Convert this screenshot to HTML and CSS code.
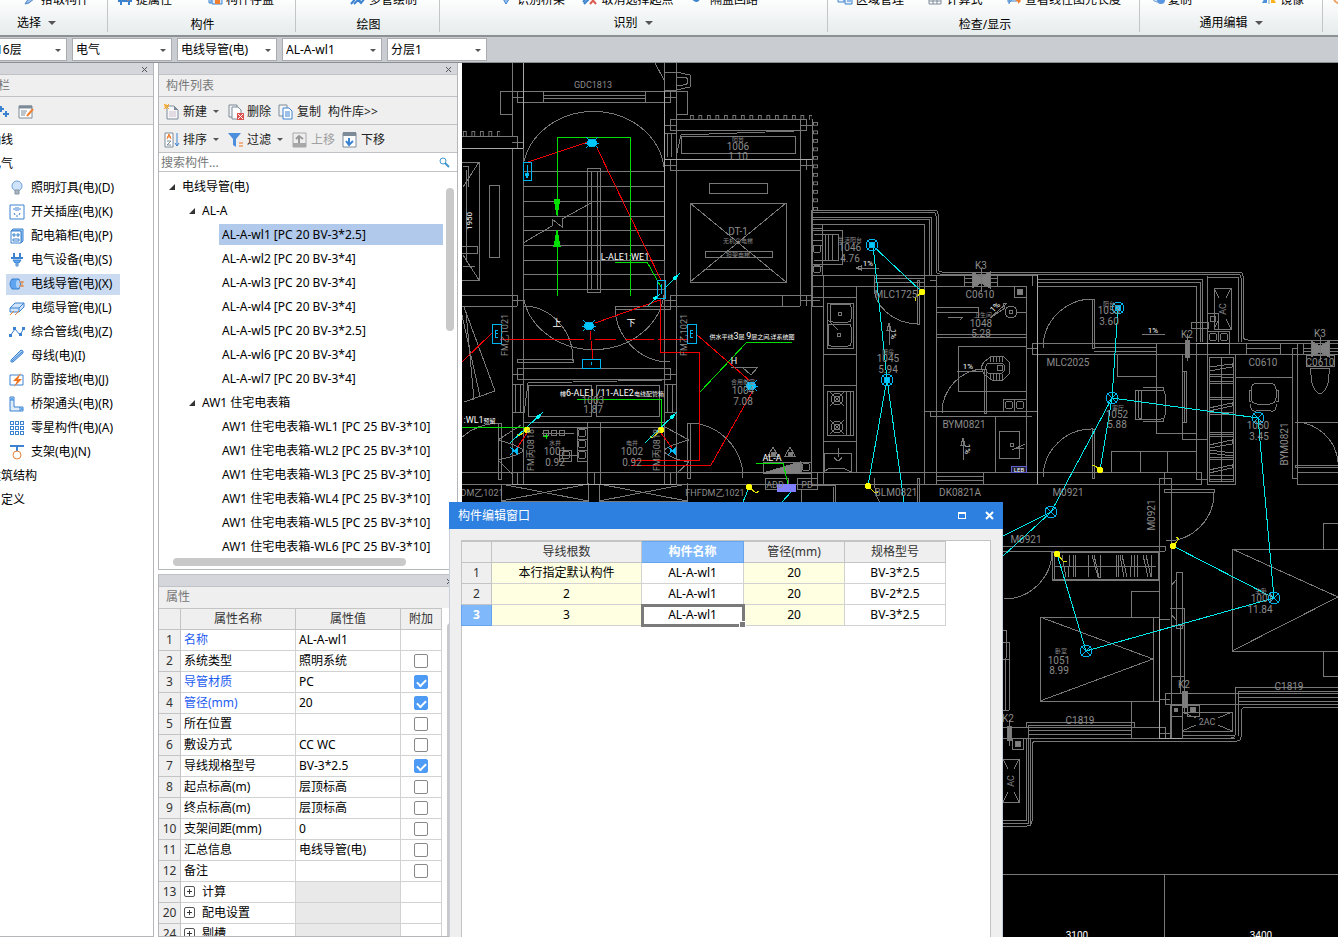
FILE: index.html
```html
<!DOCTYPE html>
<html lang="zh-CN">
<head>
    <meta charset="UTF-8">
    <meta name="viewport" content="width=device-width, initial-scale=1.0">
    <title>构件编辑</title>
    <link rel="stylesheet" href="styles.css">
</head>
<body>
    <!-- Ribbon -->
    <header class="ribbon">
        <section class="group group-select">
            <div class="tools">
                <button class="tool"><svg width="16" height="16"><path d="M3 14L9 5l4 3-6 5z" fill="#9bbce6" stroke="#4a86c8"/></svg>拾取构件</button>
            </div>
            <button class="group-name">选择<i class="caret"></i></button>
        </section>
        <section class="group group-part">
            <div class="tools">
                <button class="tool"><svg width="16" height="16"><path d="M1 11h14M4 4v11M12 4v11" stroke="#3b82d0" stroke-width="2"/><path d="M6 7h5v4" stroke="#f08030" fill="none"/></svg>提属性</button>
                <button class="tool"><svg width="16" height="16"><path d="M2 4h2v9H2zM5 5h10v9H5z" fill="#dbe9fa" stroke="#3b82d0"/><path d="M8 10h5v4H8z" fill="#f08030"/></svg>构件存盘</button>
            </div>
            <div class="group-name">构件</div>
        </section>
        <section class="group group-draw">
            <div class="tools">
                <button class="tool"><svg width="16" height="16"><path d="M1 14L6 8l3 3 6-7M4 14l4-4 3 3 4-5" stroke="#3b82d0" stroke-width="2" fill="none"/></svg>多管绘制</button>
            </div>
            <div class="group-name">绘图</div>
        </section>
        <section class="group group-detect">
            <div class="tools">
                <button class="tool"><svg width="16" height="16"><path d="M4 7l4 3 5-4-5 8z" fill="#9cc4f2" stroke="#3b82d0"/></svg>识别桥架</button>
                <button class="tool"><svg width="16" height="16"><path d="M1 12l6-7M2 14l7-7" stroke="#3b82d0" stroke-width="2"/><path d="M8 7l6 7M14 7l-6 7" stroke="#dc5b50" stroke-width="2"/></svg>取消选择起点</button>
                <button class="tool"><svg width="16" height="16"><path d="M2 9q4 4 6 0" stroke="#3b82d0" stroke-width="2" fill="none"/><path d="M12 5v5" stroke="#f08030" stroke-width="2"/></svg>隔盖回路</button>
            </div>
            <button class="group-name">识别<i class="caret"></i></button>
        </section>
        <section class="group group-check">
            <div class="tools">
                <button class="tool"><svg width="16" height="16"><path d="M1 4h6v8H1zM8 5h7v9H8z" fill="#e8f1fc" stroke="#3b82d0"/><path d="M10 9h4M10 11h4" stroke="#3b82d0"/><path d="M3 6h2v3H3z" fill="#f08030"/></svg>区域管理</button>
                <button class="tool"><svg width="16" height="16"><path d="M2 2h12v12H2zM2 8h12M2 11h12M6 5v9M10 5v9" fill="#fff" stroke="#7d8b99"/></svg>计算式</button>
                <button class="tool"><svg width="16" height="16"><path d="M1 11h10M3 4v10M3 13l6-7" stroke="#3b82d0" fill="none"/><path d="M9 10h3V7l3 4-3 3v-2z" fill="#f08030"/></svg>查看线性图元长度</button>
            </div>
            <div class="group-name">检查/显示</div>
        </section>
        <section class="group group-edit">
            <div class="tools">
                <button class="tool tool-tight"><svg width="16" height="16"><circle cx="5" cy="8" r="4" fill="#c9dff8" stroke="#7da9dc"/><circle cx="9" cy="10" r="4" fill="#5a97e0"/></svg>复制</button>
                <button class="tool"><svg width="16" height="16"><path d="M1 13l5-9v9z" fill="#4b8fdd"/><path d="M10 4l5 9h-5z" fill="#f9b21d"/><path d="M8 2v12" stroke="#8aa"/></svg>镜像</button>
            </div>
            <button class="group-name">通用编辑<i class="caret"></i></button>
        </section>
        <section class="group group-more">
            <div class="tools">
                <button class="tool" aria-label="旋转"><svg width="16" height="16"><circle cx="8" cy="8" r="5" fill="none" stroke="#f0a060" stroke-width="2"/></svg></button>
            </div>
        </section>
    </header>

    <!-- Context selectors -->
    <div class="filters">
        <div class="combo combo-floor"><select aria-label="楼层"><option>16层</option></select></div>
        <div class="combo"><select aria-label="专业"><option>电气</option></select></div>
        <div class="combo"><select aria-label="构件类型"><option>电线导管(电)</option></select></div>
        <div class="combo"><select aria-label="构件"><option>AL-A-wl1</option></select></div>
        <div class="combo"><select aria-label="分层"><option>分层1</option></select></div>
    </div>

    <main class="workspace">
        <!-- Navigation -->
        <aside class="panel nav-panel">
            <div class="strip"><button class="close" aria-label="关闭"><svg width="7" height="7"><path d="M1 1l5 5M6 1L1 6"/></svg></button></div>
            <h2>导航栏</h2>
            <div class="toolbar nav-tools">
                <button aria-label="展开"><svg width="12" height="14"><path d="M3 1v6M0 4h6M8 6v6M5 9h6" stroke="#3b82d0" stroke-width="2"/></svg></button>
                <button aria-label="编辑"><svg width="16" height="14"><path d="M1 1h13v12H1z" fill="#fff" stroke="#7d8b99"/><path d="M1 2h13" stroke="#7d8b99" stroke-width="3"/><path d="M3 6h6M3 8h5M3 10h4" stroke="#7d8b99"/><path d="M9 11l6-7" stroke="#f08030" stroke-width="2"/></svg></button>
            </div>
            <ul class="nav-list">
                <li class="top">轴线</li>
                <li class="top">电气</li>
                <li><a href="#"><svg viewBox="0 0 16 16"><circle cx="8" cy="6" r="5" fill="#cfe3fa" stroke="#6d9fd6"/><path d="M6 10h4v4H6z" fill="#aab4be" stroke="#8795a3"/></svg>照明灯具(电)(D)</a></li>
                <li><a href="#"><svg viewBox="0 0 16 16"><path d="M1 1h14v14H1z" fill="#fff" stroke="#3b82d0"/><path d="M4 5h2M10 5h2M7 3v4M9 3v4M5 9l1 2M11 9l-1 2M7 12h2" stroke="#3b82d0"/></svg>开关插座(电)(K)</a></li>
                <li><a href="#"><svg viewBox="0 0 16 16"><path d="M4 1h10v12l-2 2V3H2z" fill="#a9cdf5" stroke="#3b82d0"/><path d="M2 3h10v12H2z" fill="#fff" stroke="#3b82d0"/><path d="M4 6h2v2H4zM8 6h2v2H8zM4 11h6v2H4z" fill="#fff" stroke="#3b82d0"/></svg>配电箱柜(电)(P)</a></li>
                <li><a href="#"><svg viewBox="0 0 16 16"><path d="M5 1v5M11 1v5M2 6h12" stroke="#3b82d0" stroke-width="2"/><path d="M4 8h8l-2 3H6zM6 13h4M8 11v4" fill="#5fa4f0" stroke="#3b82d0"/></svg>电气设备(电)(S)</a></li>
                <li><a href="#" class="active"><svg viewBox="0 0 16 16"><path d="M3 3h7q3 5 0 10H3Q-1 8 3 3z" fill="#5fa4f0" stroke="#3b82d0"/><ellipse cx="9" cy="8" rx="2" ry="4" fill="#a9d0fa"/><path d="M10 6h5M10 10h5M13 5v6" stroke="#e8823a"/></svg>电线导管(电)(X)</a></li>
                <li><a href="#"><svg viewBox="0 0 16 16"><path d="M1 8l5-5h9v4l-5 5H1zM1 8h9v4M10 8l5-5" fill="#cfe3fa" stroke="#3b82d0"/><path d="M1 15l4-4M6 15l4-4" stroke="#e8823a"/></svg>电缆导管(电)(L)</a></li>
                <li><a href="#"><svg viewBox="0 0 16 16"><path d="M1 12l5-7 5 6 4-7" fill="none" stroke="#3b82d0"/><path d="M0 10h3v3H0zM4 3h3v3H4zM10 9h3v3h-3zM13 3h3v3h-3z" fill="#3b82d0"/></svg>综合管线(电)(Z)</a></li>
                <li><a href="#"><svg viewBox="0 0 16 16"><path d="M2 12L12 2l2 1v2L4 14H2z" fill="#a9cdf5" stroke="#3b82d0"/><path d="M3 13L13 4" stroke="#3b82d0"/></svg>母线(电)(I)</a></li>
                <li><a href="#"><svg viewBox="0 0 16 16"><path d="M1 3h13v10H1z" fill="#fff" stroke="#3b82d0"/><path d="M12 1L4 9h4l-3 6 8-8H9z" fill="#f0731e"/></svg>防雷接地(电)(J)</a></li>
                <li><a href="#"><svg viewBox="0 0 16 16"><path d="M1 1h4v10h9v4H1zM1 4h4M11 11v4" fill="#dfebf9" stroke="#3b82d0"/><path d="M2 2h2v2H2zM12 12h2v2h-2z" fill="#5fa4f0"/></svg>桥架通头(电)(R)</a></li>
                <li><a href="#"><svg viewBox="0 0 16 16" shape-rendering="crispEdges"><path d="M1 1h3v3H1zM6 1h3v3H6zM11 1h3v3h-3zM1 6h3v3H1zM6 6h3v3H6zM11 6h3v3h-3zM1 11h3v3H1zM6 11h3v3H6zM11 11h3v3h-3z" fill="#fff" stroke="#3b82d0"/></svg>零星构件(电)(A)</a></li>
                <li><a href="#"><svg viewBox="0 0 16 16"><path d="M1 2h14M8 2v5" stroke="#3b82d0" stroke-width="2"/><circle cx="8" cy="11" r="4" fill="#fff" stroke="#e8823a"/></svg>支架(电)(N)</a></li>
                <li class="top">建筑结构</li>
                <li class="top">自定义</li>
            </ul>
        </aside>

        <div class="column">
            <!-- Component list -->
            <section class="panel list-panel">
                <div class="strip"><button class="close" aria-label="关闭"><svg width="7" height="7"><path d="M1 1l5 5M6 1L1 6"/></svg></button></div>
                <h2>构件列表</h2>
                <div class="toolbar">
                    <button><svg width="16" height="16"><path d="M3 2h7l4 4v9H3z" fill="#f6f6f8" stroke="#7d8b99"/><path d="M10 2v4h4z" fill="#7d8b99"/><path d="M5 8h7M5 10h7M5 12h7" stroke="#cdbfd0"/><path d="M0 0l5 5M5 0L0 5M2 0v5M0 2h5" stroke="#f5a623"/></svg>新建<i class="caret small"></i></button>
                    <button><svg width="16" height="16"><path d="M1 1h8v12H1z" fill="#f4f4f4" stroke="#7d8b99"/><path d="M4 3h6l3 3v9H4z" fill="#fff" stroke="#7d8b99"/><path d="M9 9h7v7H9z" fill="#d9534f"/><path d="M10 10l5 5M15 10l-5 5" stroke="#fff"/></svg>删除</button>
                    <button><svg width="16" height="16"><path d="M1 1h8v11H1z" fill="#f4f4f4" stroke="#7d8b99"/><path d="M5 4h6l3 3v8H5z" fill="#fff" stroke="#3b82d0"/><path d="M7 8h5M7 10h5M7 12h5" stroke="#3b82d0"/></svg>复制</button>
                    <button>构件库&gt;&gt;</button>
                </div>
                <div class="toolbar">
                    <button><svg width="16" height="16"><path d="M1 1h8v14H1z" fill="#fff" stroke="#7d8b99"/><path d="M3 7l2-5 2 5M3 5h4" stroke="#f0731e" fill="none"/><path d="M3 9h4l-4 4h4" stroke="#7d8b99" fill="none"/><path d="M13 1v13M11 11l2 3 2-3" stroke="#3b82d0" fill="none"/></svg>排序<i class="caret small"></i></button>
                    <button><svg width="16" height="16"><path d="M0 1h13L8 7v8l-3-2V7z" fill="#4b8fdd"/><path d="M11 11h4M11 14h4" stroke="#f0731e"/></svg>过滤<i class="caret small"></i></button>
                    <button disabled><svg width="16" height="16"><path d="M1 1h13v14H1z" fill="#eee" stroke="#a8a8a8"/><path d="M1 13h13" stroke="#a8a8a8" stroke-width="4"/><path d="M7 11V4M4 7l3-3 4 3" stroke="#999" stroke-width="2" fill="none"/></svg>上移</button>
                    <button><svg width="16" height="16"><path d="M1 1h13v14H1z" fill="#fff" stroke="#7d8b99"/><path d="M1 2h13" stroke="#7d8b99" stroke-width="4"/><path d="M7 6v7M4 9l3 4 4-4" stroke="#3b82d0" stroke-width="2" fill="none"/></svg>下移</button>
                </div>
                <div class="search">
                    <input type="text" aria-label="搜索构件" placeholder="搜索构件...">
                    <svg width="11" height="11"><circle cx="4" cy="4" r="3" fill="none" stroke="#3e97cf"/><path d="M6 6l4 4" stroke="#3e97cf" stroke-width="2"/></svg>
                </div>
                <div class="tree-box">
                    <ul class="tree">
                        <li class="level1"><i class="open"></i>电线导管(电)</li>
                        <li class="level2"><i class="open"></i>AL-A</li>
                        <li class="level3"><span class="selected">AL-A-wl1 [PC 20 BV-3*2.5]</span></li>
                        <li class="level3"><span>AL-A-wl2 [PC 20 BV-3*4]</span></li>
                        <li class="level3"><span>AL-A-wl3 [PC 20 BV-3*4]</span></li>
                        <li class="level3"><span>AL-A-wl4 [PC 20 BV-3*4]</span></li>
                        <li class="level3"><span>AL-A-wl5 [PC 20 BV-3*2.5]</span></li>
                        <li class="level3"><span>AL-A-wl6 [PC 20 BV-3*4]</span></li>
                        <li class="level3"><span>AL-A-wl7 [PC 20 BV-3*4]</span></li>
                        <li class="level2"><i class="open"></i>AW1 住宅电表箱</li>
                        <li class="level3"><span>AW1 住宅电表箱-WL1 [PC 25 BV-3*10]</span></li>
                        <li class="level3"><span>AW1 住宅电表箱-WL2 [PC 25 BV-3*10]</span></li>
                        <li class="level3"><span>AW1 住宅电表箱-WL3 [PC 25 BV-3*10]</span></li>
                        <li class="level3"><span>AW1 住宅电表箱-WL4 [PC 25 BV-3*10]</span></li>
                        <li class="level3"><span>AW1 住宅电表箱-WL5 [PC 25 BV-3*10]</span></li>
                        <li class="level3"><span>AW1 住宅电表箱-WL6 [PC 25 BV-3*10]</span></li>
                    </ul>
                    <div class="vbar"></div>
                    <div class="hbar"></div>
                </div>
            </section>

            <!-- Properties -->
            <section class="panel prop-panel">
                <div class="strip"><button class="close" aria-label="关闭"><svg width="7" height="7"><path d="M1 1l5 5M6 1L1 6"/></svg></button></div>
                <h2>属性</h2>
                <div class="prop-body">
                    <table class="grid props">
                        <thead>
                            <tr><th class="c-num"></th><th class="c-name">属性名称</th><th class="c-value">属性值</th><th class="c-extra">附加</th></tr>
                        </thead>
                        <tbody>
                            <tr><th>1</th><td class="key">名称</td><td>AL-A-wl1</td><td></td></tr>
                            <tr><th>2</th><td>系统类型</td><td>照明系统</td><td><input type="checkbox" aria-label="系统类型"></td></tr>
                            <tr><th>3</th><td class="key">导管材质</td><td>PC</td><td><input type="checkbox" aria-label="导管材质" checked></td></tr>
                            <tr><th>4</th><td class="key">管径(mm)</td><td>20</td><td><input type="checkbox" aria-label="管径" checked></td></tr>
                            <tr><th>5</th><td>所在位置</td><td></td><td><input type="checkbox" aria-label="所在位置"></td></tr>
                            <tr><th>6</th><td>敷设方式</td><td>CC WC</td><td><input type="checkbox" aria-label="敷设方式"></td></tr>
                            <tr><th>7</th><td>导线规格型号</td><td>BV-3*2.5</td><td><input type="checkbox" aria-label="导线规格型号" checked></td></tr>
                            <tr><th>8</th><td>起点标高(m)</td><td>层顶标高</td><td><input type="checkbox" aria-label="起点标高"></td></tr>
                            <tr><th>9</th><td>终点标高(m)</td><td>层顶标高</td><td><input type="checkbox" aria-label="终点标高"></td></tr>
                            <tr><th>10</th><td>支架间距(mm)</td><td>0</td><td><input type="checkbox" aria-label="支架间距"></td></tr>
                            <tr><th>11</th><td>汇总信息</td><td>电线导管(电)</td><td><input type="checkbox" aria-label="汇总信息"></td></tr>
                            <tr><th>12</th><td>备注</td><td></td><td><input type="checkbox" aria-label="备注"></td></tr>
                            <tr><th>13</th><td><button class="expand" aria-label="展开计算"></button>计算</td><td class="off"></td><td></td></tr>
                            <tr><th>20</th><td><button class="expand" aria-label="展开配电设置"></button>配电设置</td><td class="off"></td><td></td></tr>
                            <tr><th>24</th><td><button class="expand" aria-label="展开剔槽"></button>剔槽</td><td class="off"></td><td></td></tr>
                        </tbody>
                    </table>
                    <div class="prop-bar"></div>
                </div>
            </section>
        </div>

        <!-- Floor plan -->
        <section class="canvas">
            <svg class="plan" viewBox="462 63 876 874" preserveAspectRatio="xMinYMin slice">
                <defs>
                    <g id="lamp"><circle r="6"/><path d="M-4-4L4 4M4-4L-4 4"/></g>
                    <g id="lampOn"><circle r="6"/><path d="M-5-5L5 5M5-5L-5 5"/><path class="solid" d="M-3-3h5v5h-5z"/></g>
                    <g id="bulb"><path d="M-6-6l12 11M6-6L-6 5M-7 0H7"/><ellipse class="solid" rx="5" ry="4"/></g>
                    <g id="bow"><path class="fill" d="M-9-8L0-3 9-8V8L0 3-9 8z"/><path d="M0-12V12"/></g>
                    <pattern id="railH" x="689" y="114" width="8.5" height="6" patternUnits="userSpaceOnUse"><path class="wall" d="M1 1h3v5H1z"/></pattern>
                    <pattern id="railL" x="462" y="130" width="8.5" height="7" patternUnits="userSpaceOnUse"><path class="wall" d="M1 1h3v5H1z"/></pattern>
                    <pattern id="railV" x="812" y="121" width="6" height="8.5" patternUnits="userSpaceOnUse"><path class="wall" d="M1 1h4v3H1z"/></pattern>
                </defs>

                <!-- stairwell and lift -->
                <g class="wall">
                    <path d="M512 63V137M523 63V484M512 97V114M512 148V484M664 63V484M676 63V484M500 91H687M517 91V102H670V91M500 91V114H512M687 91V114H676M543 91V102M645 91V102M543 95H645M543 98H645M512 97H523M664 97H676"/>
                    <path d="M655 63L664 80M664 72H676L690 75V87L676 90H664M676 77H683Q688 77 688 81T683 85H676"/>
                    <path d="M523 167A71 63 0 0 1 664 167M523 295A71 62 0 0 0 664 295"/>
                    <path d="M523 171H664M523 186H664M523 201H664M523 216H664M523 230H664M523 245H664M523 260H664M523 274H664M523 289H664M587 168H600V292H587zM591 171H597V289H591z"/>
                    <path d="M523 243L552 226V219L562 227V219L591 203"/>
                    <path d="M462 136H517V148M462 148H523M512 142H523M462 162H479V280H462M479 162L463 187M479 280L463 255M463 166H468V187M489 185H499V257H489zM462 246H477V253H462M463 266H475M466 170V262"/>
                    <path d="M670 119H806V130H670zM664 125H676M664 159H812M670 170H800M670 159V170M664 165H676M806 159V170M812 119V306M800 119V306M800 125H812M800 165H812M681 136H795V153H681zM681 135L794 131M681 135L676 157M664 133H676M667 133V157M671 133V157"/>
                    <path d="M709 183H767V193H709zM690 203H786V282H690zM690 203L786 282M786 203L690 282M705 251H772V257H705zM706 269H770"/>
                    <path d="M462 295H517M462 306H517M517 295V306M512 300H523M670 295H811M670 306H800M670 295V306M664 300H676M782 295V306M806 295V306M800 300H820"/>
                    <path d="M523 306A50 54 0 0 1 573 361M517 359H573V362H517zM615 306A55 56 0 0 0 670 362M615 306H670V309H615zM517 368H670V379H517zM512 374H523M664 374H676"/>
                    <path d="M464 307L495 391L464 402M462 315L480 396M466 312L474 400"/>
                    <path d="M528 385H591V416H528zM596 385H659V416H596zM528 383L663 380M528 383L523 421M515 384V412M520 384V412M667 384V412M672 384V412M512 384H523M512 412H523M664 384H676M664 412H676M523 422H664M523 427H664M587 422V484M600 422V484"/>
                    <path d="M462 437Q477 424 498 423M498 423H501V479H498zM498 440L521 425M498 440Q523 447 523 451M498 460Q520 455 523 451M498 460L512 474M665 427L689 440M689 440Q666 446 664 451Q668 458 689 462M689 462L676 474M687 423H690V478H687zM690 423A55 55 0 0 1 743 478"/>
                    <path d="M577 428H587V461H577zM577 439H587M577 450H587M542 433H574M559 450H571V461H559zM559 455H577"/>
                    <g><circle cx="582" cy="433" r="4"/><circle cx="582" cy="444" r="4"/><circle cx="582" cy="455" r="4"/><circle cx="546" cy="433" r="3"/><circle cx="554" cy="433" r="3"/><circle cx="562" cy="433" r="3"/><circle cx="566" cy="455" r="4"/></g>
                    <path d="M462 472H817V484H462M501 484V501H588V484L501 501M501 484L588 501M599 484V501H687V484L599 501M599 484L687 501M517 472V484M523 472V484M594 472V484M670 472V484"/>
                    <path d="M731 367H758L751 375L742 367M763 462H811V473H763zM801 462V473M765 478H788V489H765zM797 478H817V489H797zM801 489V502M768 456L773 447L778 456zM785 456L790 447L795 456z"/>
                    <path class="fill" d="M763 473L800 462V473zM771 452h4v3h-4zM788 452h4v3h-4z"/><circle cx="806" cy="467" r="4"/>
                </g>
                <path fill="url(#railH)" d="M689 114H812V120H689z"/>
                <path fill="url(#railL)" d="M462 130H500V137H462z"/>
                <path fill="url(#railV)" d="M812 121H818V210H812z"/>

                <!-- kitchen, bath -->
                <g class="wall">
                    <path d="M812 210H934Q938 210 938 214V268Q938 272 942 272H1239Q1243 272 1243 276V335Q1243 340 1248 340H1338M812 212H932Q936 212 936 216V270Q936 274 940 274H1237Q1241 274 1241 278V342"/>
                    <path d="M812 217H931V275M812 219H929V275M812 224H924V275M812 230H842V264H812M814 234H838V260H814M825 234V260M828 234V260M832 234V260M822 224V275M812 228H822M812 240H822M812 245H822M812 266H822"/>
                    <circle cx="817" cy="249" r="4"/><circle cx="817" cy="269" r="4"/>
                    <path d="M811 275H1037V484M811 286H1026V472M811 210V484M823 275V484M856 286V472M874 275V286M874 278H924M874 282H924M924 275V484M936 275V484M930 280H936V291M811 297H823M811 306H823V295M964 275V286M997 275V286M964 278H997M964 282H997"/>
                    <path d="M823 297H856M823 354H856M823 385H856M823 441H856M827 303H853V348H827zM827 391H853V435H827zM846 391V435M850 391V435M824 453H851V472L843 468H829L824 472zM838 448V457"/>
                    <rect x="830" y="304" width="21" height="18" rx="3"/><rect x="828" y="324" width="23" height="22" rx="3"/>
                    <circle cx="840" cy="314" r="2"/><circle cx="839" cy="335" r="2"/><circle cx="837" cy="399" r="6"/><circle cx="837" cy="399" r="3"/><circle cx="837" cy="427" r="6"/><circle cx="837" cy="427" r="3"/>
                    <path d="M830 392L844 406M844 392L830 406M830 420L844 434M844 420L830 434M828 320L838 330M834 457Q838 464 842 457"/>
                    <path d="M874 286A45 38 0 0 0 918 324M917 280H919V324H917zM856 268H879M856 268l5-2v4zM889 323V345M889 323l-2 7h4zM957 371H983M990 318L1007 303l-4 1 2 4zM963 438V460M963 438l-2 7h4z"/>
                    <path d="M936 307H978V318M936 312H978M948 317H963L960 320M936 334H1026M936 337H1026M1014 286V297H1026M958 346H1026V391H958zM1003 399H1026V411H1003zM1014 399V411M1017 312H1026"/>
                    <circle cx="1011" cy="312" r="6"/><circle cx="1011" cy="312" r="2"/><circle class="fill" cx="1020" cy="292" r="3"/><circle cx="1009" cy="405" r="4"/><circle cx="1020" cy="405" r="4"/>
                    <path d="M985 361Q978 368 985 375L992 380H1003L1009 374V362L1003 356H992zM988 363Q983 368 988 373H1002Q1008 368 1002 363zM990 356V362M993 356V362M996 356V362M999 356V362M1002 356V362M990 374V380M993 374V380M996 374V380M999 374V380M1002 374V380"/><circle cx="1000" cy="368" r="3"/>
                    <path d="M924 411H1037M930 416H1032M930 411V416M942 413A43 44 0 0 1 984 369M984 369H986V413H984zM995 416V472M999 431H1019V458H999zM1012 450L1025 444M1014 448L1024 448"/><circle cx="1012" cy="445" r="2"/>
                    <path d="M811 472H1037M811 484H1037M936 476H983M936 480H983M983 472V484M811 485H835V502M833 487V502M874 478Q875 497 880 502M917 478H919V502H917z"/>
                    <path d="M1037 279H1202V342M1037 282H1200V342M1037 286H1196V342M1026 275L1032 275V286M1032 343H1338M1032 354H1338M1032 343V354M1026 348H1037M1043 348A50 49 0 0 1 1093 299M1092 299H1094V348H1092zM1043 478A49 49 0 0 1 1093 429M1092 429H1094V478H1092z"/>
                    <path d="M1094 347H1156M1094 351H1156M1156 343V354M1117 354V376H1156M1156 354V433H1196M1182 354V439H1207M1182 371H1186V422H1182zM1184 371V422M1196 343V479H1207M1207 276V484M1207 277H1238V342M1111 451H1196V472M1111 451V472M1140 451V472M1167 451V472M1037 472H1201V484H1037"/>
                    <rect x="1138" y="390" width="27" height="29" rx="4"/><path d="M1135 390H1141V419H1135zM1143 387H1163V390M1143 421H1163V418"/>
                    <path d="M1214 288H1231V329H1214zM1214 288L1219 298M1231 288L1226 298M1214 329L1219 319M1231 329L1226 319M1191 322H1208V328H1191zM1207 313H1218V329M1207 331H1229V354M1218 331V342M1142 334H1165"/>
                    <circle cx="1213" cy="319" r="3"/><circle cx="1213" cy="337" r="4"/><circle cx="1224" cy="337" r="4"/>
                    <path d="M1207 354H1235V484H1207zM1209 357H1233V481H1209zM1221 357V481M1209 367L1232 364V367L1209 371zM1209 374L1233 375V378L1209 376zM1209 381H1233M1209 383H1233M1209 397H1233M1209 399H1233M1209 408L1232 403V406L1209 411zM1209 412H1233M1209 414H1233M1209 432H1233M1209 434H1233M1209 437L1233 436M1209 445L1232 440V444L1209 448zM1209 450L1233 453V456L1209 453zM1209 457H1233M1209 459H1233M1209 470L1232 465V468L1209 473zM1209 475H1233M1209 479H1233"/>
                    <path d="M1246 343V354M1280 343V354M1246 348H1280M1236 377H1292M1292 348V478M1297 343V484M1292 348H1297M1292 478H1297M1306 355H1334V366H1306zM1303 343V354M1303 348H1338M1303 351H1338M1311 368Q1310 390 1320 394Q1330 390 1329 368z"/>
                    <rect x="1251" y="383" width="25" height="21" rx="6"/><path d="M1251 404Q1250 412 1256 411Q1263 409 1271 411Q1277 412 1276 404M1251 390H1249V401H1251M1276 390H1278V401H1276"/>
                    <path d="M1295 422A44 44 0 0 1 1338 462M1297 422H1338M1295 465H1338V467H1295zM1297 472H1338M1297 484H1338"/>
                </g>

                <!-- bedrooms and outer wall -->
                <g class="wall">
                    <path d="M1159 478V738M1171 478V738M1159 478H1171M1164 472V484M1164 489H1214V492H1164zM1214 492A48 48 0 0 1 1166 541M1003 546H1165V551M1003 551H1165M1052 552H1158V580H1052zM1054 554V580M1052 579H1158M1054 566H1156M1052 552A48 48 0 0 1 1003 599"/>
                    <path d="M1062 555L1066 577M1068 577L1070 555M1073 555V577M1075 555V577M1088 555V577M1092 555L1098 577H1100V555M1094 555L1099 577M1116 555V577M1118 555V577M1120 555L1124 577M1122 555L1127 577M1130 577L1132 555M1134 577V555M1137 555V577M1143 555L1148 577M1146 555L1151 577V555"/>
                    <path d="M1159 591H1131V617M1040 617H1159V701H1040zM1153 617V701M1040 617L1153 659L1040 701M1131 701V738M1159 619H1170M1159 699H1170M1159 733H1170"/>
                    <path d="M1338 523H1323V549M1338 549H1232V651H1338M1232 549L1338 597L1232 651M1323 651V676H1338M1176 572H1182V628H1176zM1171 586L1176 580M1171 614L1176 620M1170 608H1184V693M1180 625V693M1171 625H1184M1171 676H1184"/>
                    <path d="M1165 693H1338M1165 704H1238M1165 693V704M1170 738V704M1338 687H1235V735Q1235 738 1231 738M1338 691H1238V736M1238 697H1338M1238 701H1338M1238 704H1338M1338 707H1246Q1241 707 1241 712V737Q1241 741 1237 741H1036Q1032 741 1032 746V821Q1032 826 1027 826H1003M1182 712H1232V731H1182zM1182 712L1196 718M1232 712L1218 718M1182 731L1196 725M1232 731L1218 725M1170 705H1182V716H1170zM1187 705H1199V716H1187zM1182 704V738M1182 735H1235"/>
                    <circle class="fill" cx="1176" cy="710" r="2"/><circle class="fill" cx="1193" cy="710" r="3"/>
                    <path d="M1026 727V722H1134V727M1003 727H1165V738M1029 725H1131M1029 730H1131M1029 734H1131M1131 727V738M1003 738H1235M1026 738V820H1003M1028 725V823H1003M1030 738V824M1012 738H1023V749H1012zM1003 759H1019V802H1003M1003 759L1008 769M1019 759L1014 769M1003 802L1008 792M1019 802L1014 792M1009 642V710M1003 630H1006V658M1003 642H1009M1005 658V710M1003 659H1009M1003 710H1009"/>
                    <circle class="fill" cx="1018" cy="744" r="3"/>
                    <path d="M1003 874H1338M1164 874V937"/>
                </g>
                <g class="wall">
                    <use href="#bow" x="981" y="280"/><use href="#bow" x="1320" y="349"/>
                    <path class="fill" d="M1185 340H1189V357H1185zM1182 691H1187V707H1182zM1007 726H1011V740H1007z"/><path d="M1187 334V361M1184 686V712M1009 720V746"/>
                </g>
                <path class="bright" d="M523 63V148M664 91V260M462 148H523M512 484H676M664 159H812M1037 275V484M1159 619V738H1182M1196 343H1229"/>

                <!-- red circuit -->
                <path class="red" d="M588 142L528 162M597 148L661 280M595 323L660 300M590 331L593 359M500 339H584M595 339H616M625 339H654M658 339H687M492 333L462 362M660 298V352H699V460H631M752 392L711 465H631M696 334L750 381M527 433L517 448M661 433L672 448"/>

                <!-- green leaders -->
                <g class="green">
                    <path d="M557 137H630V296M557 137V216M557 231V296M615 262H647L661 287M577 399H661V430M462 427H525M700 392L747 342H792M756 463H783L788 484M543 436h5M546 434v5"/>
                    <path class="gfill" d="M554 199H560L557 215zM557 230L554 246H560z"/>
                </g>

                <!-- cyan circuit -->
                <path class="cyan" d="M872 245L921 291M873 245L887 379L868 486M887 379L904 502M1118 308L1112 398L1051 512L1003 536M1051 512L1003 556M1112 398L1100 470M1112 398L1258 418L1274 598L1173 546M1274 598L1086 651L1057 554M748 490L743 502M791 492L782 502M664 289L680 273M648 306L660 294M543 412L510 443M677 412L645 443"/>
                <path class="cfill" d="M680 273l-8 5 3 3zM543 412l-8 5 3 3zM677 412l-8 5 3 3zM655 301l-3-3 8-4z"/>
                <g class="blue">
                    <path d="M523 162H531V180H523zM527 165V177M657 280H665V298H657zM661 284V294M582 359H600V368H582zM492 324H501V343H492zM687 324H696V343H687zM498 330H495V337H498M495 333H498M693 330H690V337H693M690 333H693M591 362V365M510 447L518 455M518 447L510 455M668 447L676 455M676 447L668 455"/>
                    <path class="solid" d="M525 173h4l-2 5zM512 448l5 5v-5l-5 5zM670 448l5 5v-5l-5 5z"/>
                    <use href="#bulb" x="592" y="143"/><use href="#bulb" x="589" y="326"/><use href="#bulb" x="751" y="386"/>
                    <use href="#lampOn" x="872" y="245"/><use href="#lampOn" x="887" y="380"/><use href="#lampOn" x="1118" y="308"/>
                    <use href="#lamp" x="1112" y="398"/><use href="#lamp" x="1258" y="418"/><use href="#lamp" x="1051" y="512"/><use href="#lamp" x="1086" y="651"/><use href="#lamp" x="1274" y="598"/>
                </g>
                <g class="yellow">
                    <path d="M527 430L519 436l-2-2M661 430L652 438l-2-2M749 487L756 493l3-2M922 292L915 298v3M868 486L875 493l3-1M1100 470L1094 465l-2 1M1173 546L1179 539l-3-2M1057 554L1064 562l3-1"/>
                    <circle cx="527" cy="430" r="3"/><circle cx="661" cy="430" r="3"/><circle cx="749" cy="487" r="3"/><circle cx="922" cy="292" r="3"/><circle cx="868" cy="486" r="3"/><circle cx="1100" cy="470" r="3"/><circle cx="1173" cy="546" r="3"/><circle cx="1057" cy="554" r="3"/>
                </g>
                <path fill="#8080ff" d="M777 484H796V492H777z"/>
                <path fill="#223" stroke="#6060d0" d="M1011 466H1026V472H1011z"/>

                <!-- labels -->
                <g class="label">
                    <text class="narrow" x="593" y="88">GDC1813</text>
                    <text x="738" y="150">1006</text><text x="738" y="160">1.10</text>
                    <text x="738" y="235">DT-1</text>
                    <text x="593" y="404">1003</text><text x="593" y="413">1.87</text>
                    <text x="555" y="455">1001</text><text x="555" y="466">0.92</text>
                    <text x="632" y="455">1002</text><text x="632" y="466">0.92</text>
                    <text x="743" y="394">1004</text><text x="743" y="405">7.08</text>
                    <text class="narrow" x="482" y="496">DM乙1021</text><text class="narrow" x="715" y="496">FHFDM乙1021</text>
                    <text class="narrow" x="775" y="488">ADD</text><text class="narrow" x="807" y="488">PD</text>
                    <text x="850" y="251">1046</text><text x="850" y="262">4.76</text>
                    <text x="896" y="298">MLC1725</text><text x="888" y="362">1045</text><text x="888" y="373">5.94</text>
                    <text x="981" y="269">K3</text><text x="980" y="298">C0610</text>
                    <text x="981" y="327">1048</text><text x="981" y="337">5.28</text>
                    <text x="964" y="428">BYM0821</text><text x="896" y="496">BLM0821</text><text x="960" y="496">DK0821A</text><text x="1068" y="496">M0921</text>
                    <text x="1109" y="314">1053</text><text x="1109" y="325">3.60</text>
                    <text x="1068" y="366">MLC2025</text><text x="1117" y="418">1052</text><text x="1117" y="428">5.88</text>
                    <text x="1187" y="338">K2</text><text x="1320" y="337">K3</text>
                    <text x="1263" y="366">C0610</text><text x="1320" y="366">C0610</text>
                    <text x="1258" y="429">1050</text><text x="1259" y="440">3.45</text>
                    <text x="1026" y="543">M0921</text><text x="1059" y="664">1051</text><text x="1059" y="674">8.99</text>
                    <text x="1262" y="602">1001</text><text x="1260" y="613">11.84</text>
                    <text x="1289" y="690">C1819</text><text x="1080" y="724">C1819</text>
                    <text x="1184" y="688">K2</text><text x="1008" y="722">K2</text><text class="narrow" x="1207" y="725">2AC</text>
                    <text class="narrow" transform="translate(508 335) rotate(-90)">FM乙1021</text>
                    <text class="narrow" transform="translate(687 335) rotate(-90)">FM乙1021</text>
                    <text class="narrow" transform="translate(534 450) rotate(-90)">FM丙0818</text>
                    <text class="narrow" transform="translate(660 450) rotate(-90)">FM丙0818</text>
                    <text transform="translate(1155 515) rotate(-90)">M0921</text>
                    <text transform="translate(1288 444) rotate(-90)">BYM0821</text>
                    <text class="narrow" transform="translate(1226 309) rotate(-90)">AC</text>
                    <text class="narrow" transform="translate(1014 781) rotate(-90)">AC</text>
                    <g class="tiny">
                        <text x="738" y="141">阳台</text><text x="738" y="243">无机房电梯</text><text x="738" y="257">担架电梯</text>
                        <text x="555" y="445">水井</text><text x="632" y="445">电井</text><text x="743" y="384">合用前室</text>
                        <text x="850" y="242">生活阳台</text><text x="888" y="354">厨房</text><text x="983" y="317">卫生间</text><text x="1109" y="306">阳台</text>
                        <text x="1118" y="410">客厅</text><text x="1061" y="653">卧室</text><text x="1261" y="593">主卧</text>
                    </g>
                </g>
                <g class="label white">
                    <text class="narrow" x="625" y="260">L-ALE1:WE1</text>
                    <text class="narrow" x="772" y="461">AL-A</text>
                    <text class="narrow" x="734" y="364">H</text>
                    <text class="narrow" x="612" y="396"><tspan class="tiny">幢</tspan>6-ALE1 /11-ALE2<tspan class="tiny">电线配管箱</tspan></text>
                    <text class="narrow" x="477" y="423">1:WL1<tspan class="tiny">预留</tspan></text>
                    <text class="tiny" x="752" y="339">供水平线<tspan class="narrow">3</tspan>层.<tspan class="narrow">9</tspan>层之间,详系统图</text>
                    <text class="narrow" x="557" y="326">上</text><text class="narrow" x="631" y="326">下</text>
                    <text class="mark" transform="translate(472 221) rotate(-90)">1950</text>
                    <text class="mark" x="868" y="266">1%</text><text class="mark" x="968" y="369">1%</text><text class="mark" x="1153" y="333">1%</text>
                    <text class="mark" transform="translate(891 334) rotate(90)">1%</text>
                    <text class="mark" transform="translate(965 449) rotate(90)">1%</text>
                    <text class="mark" transform="translate(997 309) rotate(-45)">1%</text>
                    <text class="tiny" x="1019" y="472">LEB</text>
                    <text x="1077" y="939">3100</text><text x="1261" y="939">3400</text>
                </g>
            </svg>
        </section>
    </main>

    <!-- Component edit window -->
    <section class="dialog" role="dialog" aria-label="构件编辑窗口">
        <header>
            <h2>构件编辑窗口</h2>
            <button aria-label="最大化"><svg width="9" height="9" shape-rendering="crispEdges"><path d="M0 1h8v7H0zM1 3v4h6V3z" fill="#fff" fill-rule="evenodd"/></svg></button>
            <button aria-label="关闭"><svg width="9" height="9"><path d="M1 1l7 7M8 1L1 8" stroke="#fff" stroke-width="2"/></svg></button>
        </header>
        <div class="sheet">
            <table class="grid parts">
                <thead>
                    <tr><th class="p-num"></th><th class="p-count">导线根数</th><th class="p-name on">构件名称</th><th class="p-size">管径(mm)</th><th class="p-spec">规格型号</th></tr>
                </thead>
                <tbody>
                    <tr><th>1</th><td class="fixed">本行指定默认构件</td><td>AL-A-wl1</td><td class="fixed">20</td><td>BV-3*2.5</td></tr>
                    <tr><th>2</th><td class="fixed">2</td><td>AL-A-wl1</td><td class="fixed">20</td><td>BV-2*2.5</td></tr>
                    <tr><th class="on">3</th><td class="fixed">3</td><td class="current">AL-A-wl1</td><td class="fixed">20</td><td>BV-3*2.5</td></tr>
                </tbody>
            </table>
        </div>
    </section>
</body>
</html>
```
FILE: styles.css
```css
* {
    margin: 0;
    padding: 0;
    box-sizing: border-box;
}

body {
    position: relative;
    display: flex;
    flex-direction: column;
    height: 100vh;
    overflow: hidden;
    background-color: #fff;
    color: #000;
    font-family: "Noto Sans", "Noto Sans CJK SC", sans-serif;
    font-size: 12px;
    line-height: 16px;
}

button,
input,
select {
    font: inherit;
    color: inherit;
}

button {
    display: flex;
    align-items: center;
    border: none;
    background: none;
    white-space: nowrap;
}

ul {
    list-style: none;
}

h2 {
    font-size: 12px;
    font-weight: normal;
}

/* Ribbon */
.ribbon {
    display: flex;
    flex: none;
    height: 37px;
    overflow: hidden;
    background: linear-gradient(#fdfefe, #e6ebeb);
    border-bottom: 2px solid #8e9194;
}

.group {
    display: flex;
    flex: none;
    flex-direction: column;
    height: 32px;
    border-right: 1px solid #c3c5c7;
}

.tools {
    display: flex;
    justify-content: space-between;
    height: 16px;
    margin-top: -8px;
}

.tool {
    gap: 3px;
}

.tool-tight {
    gap: 0;
}

.tool svg {
    margin-top: -4px;
}

.group-name {
    align-self: center;
    margin-top: 9px;
}

button.group-name {
    gap: 7px;
    margin-top: 7px;
}

.group-select { width: 108px; padding-left: 22px; }
.group-part { width: 188px; padding: 0 21px 0 9px; }
.group-draw { width: 144px; padding-left: 54px; }
.group-detect { width: 388px; padding: 0 69px 0 58px; }
.group-check { width: 312px; padding: 0 18px 0 9px; }
.group-edit { width: 183px; padding: 0 18px 0 12px; }
.group-more { flex: 1; padding-left: 8px; border: none; }
.group-select .group-name { margin-left: -56px; }
.group-part .group-name { margin-left: 14px; }
.group-draw .group-name { margin-left: -52px; }
.group-detect .group-name { margin-left: 10px; }
.group-check .group-name { margin-left: 12px; }
.group-edit .group-name { margin-left: 6px; }

.caret {
    border: 4px solid transparent;
    border-top-color: #555;
    border-bottom: none;
}

.caret.small {
    border-width: 3px 3px 0;
    margin: 0 2px 0 3px;
}

/* Context selectors */
.filters {
    display: flex;
    flex: none;
    gap: 5px;
    height: 26px;
    padding-top: 1px;
    background-color: #c9cdd1;
    border-bottom: 1px solid #8a8f94;
}

.combo {
    position: relative;
    width: 100px;
}

.combo select {
    width: 100%;
    height: 23px;
    padding-left: 3px;
    appearance: none;
    background-color: #fff;
    border: 1px solid #a9abae;
    border-radius: 0;
}

.combo::after {
    content: "";
    position: absolute;
    top: 11px;
    right: 6px;
    border: 3px solid transparent;
    border-top-color: #555;
    border-bottom: none;
}

.combo-floor {
    width: 67px;
}

.combo-floor select {
    padding-left: 0;
    border-left: none;
    text-indent: -4px;
}

/* Side panels */
.workspace {
    display: flex;
    flex: 1;
    gap: 4px;
    min-height: 0;
}

.panel {
    display: flex;
    flex-direction: column;
    border: 1px solid #b4b6ba;
    border-top: none;
    background-color: #fff;
}

.strip {
    display: flex;
    flex: none;
    align-items: center;
    justify-content: flex-end;
    height: 12px;
    padding: 1px 5px 0 0;
    background-color: #d4d6db;
    border-bottom: 1px solid #c0c2c6;
}

.close path {
    stroke: #555;
}

.panel h2 {
    flex: none;
    height: 22px;
    padding: 3px 7px 0;
    background-color: #efefef;
    border-bottom: 1px solid #c0c2c6;
    color: #777;
}

.toolbar {
    display: flex;
    flex: none;
    align-items: center;
    gap: 7px;
    height: 28px;
    padding: 2px 5px 0;
    background-color: #efefef;
    border-bottom: 1px solid #c0c2c6;
    color: #222;
}

.toolbar button {
    gap: 3px;
}

.toolbar button:disabled {
    color: #a0a0a0;
}

.nav-panel {
    flex: none;
    width: 188px;
    margin-left: -34px;
}

.nav-tools {
    gap: 8px;
    padding-left: 31px;
}

.nav-list {
    padding-top: 3px;
}

.nav-list li {
    display: flex;
    align-items: center;
    height: 24px;
    padding-left: 39px;
}

.nav-list li.top {
    padding-left: 22px;
}

.nav-list a {
    display: flex;
    align-items: center;
    gap: 6px;
    height: 21px;
    padding: 0 8px 0 3px;
    color: #000;
    text-decoration: none;
}

.nav-list a.active {
    background-color: #c9daf1;
}

.nav-list svg {
    width: 16px;
    height: 16px;
}

.column {
    display: flex;
    flex: none;
    flex-direction: column;
    gap: 4px;
    width: 300px;
}

.list-panel {
    flex: none;
}

.search {
    display: flex;
    flex: none;
    align-items: center;
    height: 19px;
    padding: 1px 7px 0 2px;
    border-bottom: 1px solid #c0c2c6;
}

.search input {
    flex: 1;
    border: none;
    outline: none;
}

.search input::placeholder {
    color: #777;
}

.tree-box {
    position: relative;
    height: 397px;
    overflow: hidden;
}

.tree {
    padding-top: 3px;
}

.tree li {
    display: flex;
    align-items: center;
    gap: 7px;
    height: 24px;
    white-space: nowrap;
}

.tree .level1 { padding-left: 10px; }
.tree .level2 { padding-left: 30px; }
.tree .level3 { align-items: flex-start; padding: 1px 14px 0 60px; }

.tree span {
    flex: 1;
    height: 21px;
    padding: 3px 3px 2px;
}

.tree .selected {
    background-color: #b1caec;
}

.open {
    border: 3px solid transparent;
    border-right-color: #333;
    border-bottom-color: #333;
}

.vbar,
.hbar {
    position: absolute;
    border-radius: 4px;
    background-color: #c9c9c9;
}

.vbar {
    top: 16px;
    right: 3px;
    width: 8px;
    height: 143px;
}

.hbar {
    bottom: 3px;
    left: 14px;
    width: 233px;
    height: 8px;
}

/* Tables */
.grid {
    border-collapse: collapse;
    table-layout: fixed;
}

.grid tr {
    height: 21px;
}

.grid th {
    border: 1px solid #c4c4c4;
    background-color: #efefef;
    color: #333;
    font-weight: normal;
}

.grid td {
    border: 1px solid #d2d2d2;
    white-space: nowrap;
}

.prop-panel {
    flex: 1;
    min-height: 0;
    overflow: hidden;
    border-top: 1px solid #c0c2c6;
}

.prop-panel .close {
    margin-right: -1px;
}

.prop-panel h2 {
    height: 21px;
    padding-top: 2px;
    border-bottom: none;
}

.prop-body {
    display: flex;
    gap: 5px;
}

.props {
    width: 284px;
    margin-left: -1px;
}

.c-num { width: 22px; }
.c-name { width: 115px; }
.c-value { width: 105px; }

.props td {
    padding-left: 3px;
}

.props td:last-child {
    padding: 0;
    text-align: center;
}

.props .key {
    color: #1e5df0;
}

.props .off {
    background-color: #e9e9e9;
}

.props input {
    display: block;
    width: 14px;
    height: 14px;
    margin: 0 auto;
    appearance: none;
    background-color: #fff;
    border: 1px solid #888;
    border-radius: 2px;
}

.props input:checked {
    background: #4e9bf5;
    border-color: #4e9bf5;
}

.props input:checked::after {
    content: "";
    display: block;
    width: 7px;
    height: 4px;
    margin: 3px 2px;
    border: solid #fff;
    border-width: 0 0 2px 2px;
    transform: rotate(-45deg);
}

.expand {
    display: inline-block;
    width: 11px;
    height: 11px;
    margin-right: 7px;
    border: 1px solid #555;
    border-radius: 2px;
    background: linear-gradient(#333, #333) center / 5px 1px no-repeat, linear-gradient(#333, #333) center / 1px 5px no-repeat;
}

.prop-bar {
    width: 8px;
    margin-top: 15px;
    border-radius: 4px;
    background-color: #c9c9c9;
}

/* Floor plan */
.canvas {
    flex: 1;
    min-width: 0;
    overflow: hidden;
    background-color: #000;
}

.plan {
    display: block;
    width: 100%;
    height: 100%;
    fill: none;
    shape-rendering: crispEdges;
}

.wall { stroke: #787878; }
.fill { fill: #808080; }
.bright { stroke: #a8a8a8; }
.red { stroke: #f00000; }
.green { stroke: #00e000; }
.gfill { fill: #00e000; }
.cyan { stroke: #00eaea; }
.cfill { fill: #00ffff; }
.blue { stroke: #00b4f0; }
.solid { fill: #00c8ff; }

.yellow {
    fill: #ffff00;
}

.yellow path {
    fill: none;
    stroke: #e0e000;
}

.label {
    fill: #8c8c8c;
    font-family: Roboto, "Noto Sans CJK SC", sans-serif;
    font-size: 10px;
    text-anchor: middle;
}

.label .narrow { font-size: 9px; }
.label .mark { font-size: 8px; }
.label .tiny { font-size: 6px; }
.label.white { fill: #fff; }

/* Component edit window */
.dialog {
    position: absolute;
    top: 502px;
    bottom: 0;
    left: 449px;
    display: flex;
    flex-direction: column;
    width: 554px;
    background-color: #efefef;
    border: 1px solid #c5cfdd;
    border-width: 0 1px;
}

.dialog header {
    display: flex;
    align-items: center;
    gap: 18px;
    height: 27px;
    margin: 0 -1px;
    padding: 0 9px;
    background-color: #2d7fe0;
    color: #fff;
}

.dialog h2 {
    flex: 1;
}

.sheet {
    flex: 1;
    margin: 11px 11px 0;
    background-color: #fff;
    border: 1px solid #c4c4c4;
    border-bottom: none;
}

.parts {
    width: 485px;
    margin-left: -1px;
    text-align: center;
}

.p-num { width: 30px; }
.p-count { width: 150px; }
.p-name { width: 102px; }
.p-size { width: 101px; }

.parts .fixed {
    background-color: #ffffe1;
}

.parts .on {
    background-color: #80b9fb;
    border-color: #64a5ee;
    color: #fff;
    font-weight: bold;
}

.parts .current {
    position: relative;
    outline: 3px solid #7a7a7a;
    outline-offset: -2px;
}

/* fill handle in the corner of the current cell */
.parts .current::after {
    content: "";
    position: absolute;
    right: -3px;
    bottom: -3px;
    width: 5px;
    height: 5px;
    border: 1px solid #fff;
    background-color: #7a7a7a;
}
```
